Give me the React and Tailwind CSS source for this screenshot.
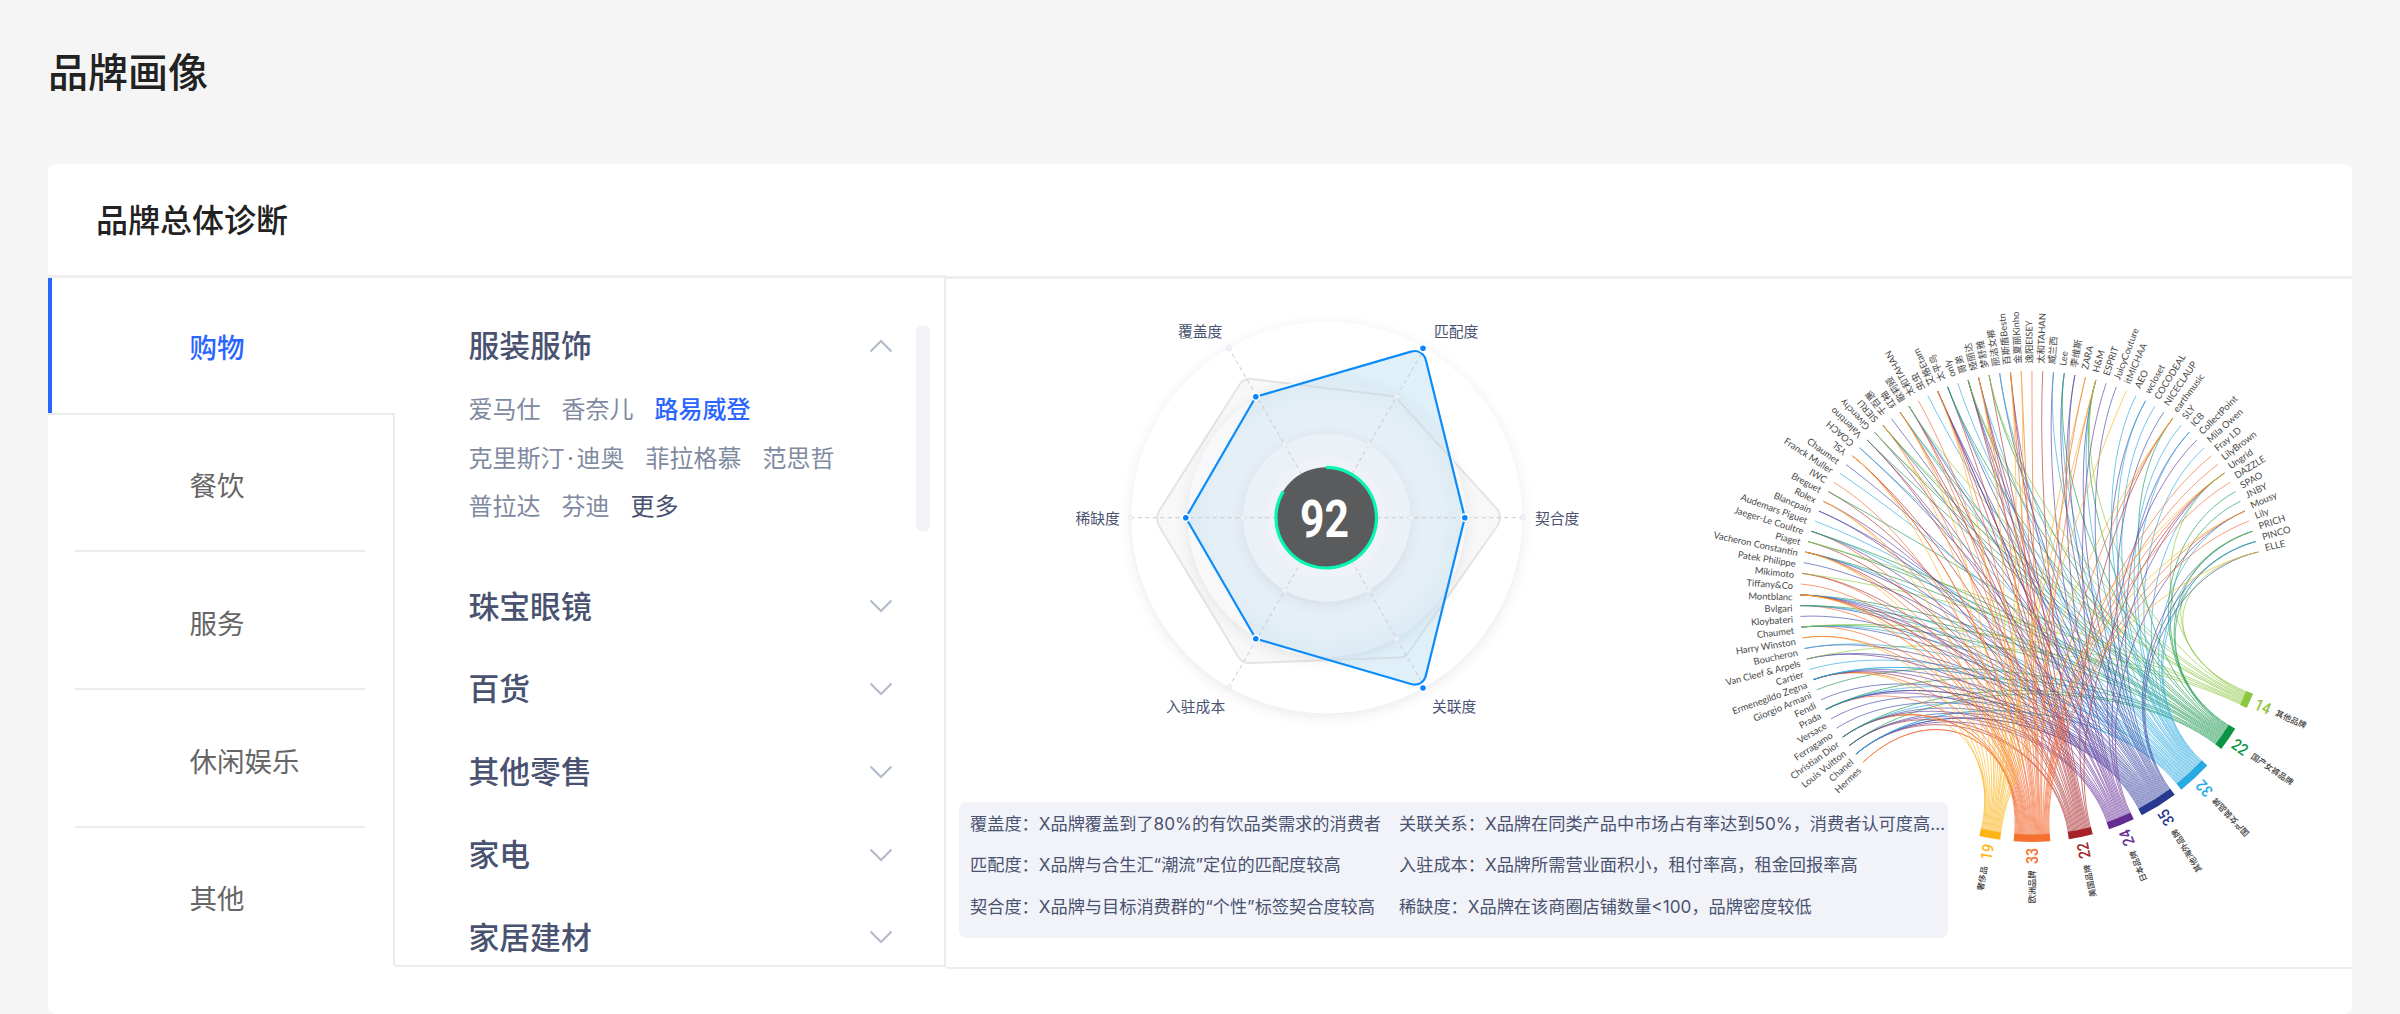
import React from "react";

const FONT = "font-['Noto_Sans_CJK_SC',sans-serif]";

const TABS = ["购物", "餐饮", "服务", "休闲娱乐", "其他"];

const BRAND_ROWS = [
  [{ t: "爱马仕" }, { t: "香奈儿" }, { t: "路易威登", k: "active" }],
  [{ t: "克里斯汀·迪奥" }, { t: "菲拉格慕" }, { t: "范思哲" }],
  [{ t: "普拉达" }, { t: "芬迪" }, { t: "更多", k: "more" }],
];

const CATEGORIES = ["珠宝眼镜", "百货", "其他零售", "家电", "家居建材"];

const NOTES = [
  ["覆盖度：X品牌覆盖到了80%的有饮品类需求的消费者", "关联关系：X品牌在同类产品中市场占有率达到50%，消费者认可度高…"],
  ["匹配度：X品牌与合生汇“潮流”定位的匹配度较高", "入驻成本：X品牌所需营业面积小，租付率高，租金回报率高"],
  ["契合度：X品牌与目标消费群的“个性”标签契合度较高", "稀缺度：X品牌在该商圈店铺数量<100，品牌密度较低"],
];

function Chevron({ up }) {
  return (
    <svg width="24" height="14" viewBox="0 0 24 14" fill="none" stroke="#b4bccb" strokeWidth="2.2">
      <path d={up ? "M1.5 12.5 12 2l10.5 10.5" : "M1.5 1.5 12 12 22.5 1.5"} />
    </svg>
  );
}

function Sidebar() {
  return (
    <nav className="w-[347px] shrink-0 text-[27.5px] text-[#666]">
      {TABS.map((t, i) =>
        i === 0 ? (
          <div key={t} className="flex h-[135px] items-center border-l-4 border-[#2b65ff] pt-[2px] pl-[137.5px] font-medium text-[#2b65ff]">
            {t}
          </div>
        ) : (
          <div
            key={t}
            className={
              i === 1
                ? "flex h-[139px] flex-col border-t-2 border-r-2 border-[#ececec]"
                : "flex h-[138px] flex-col border-r-2 border-[#ececec]"
            }
          >
            <div className={i === 4 ? "flex grow items-center pt-[2px] pl-[141.5px]" : "flex grow items-center pt-[5px] pl-[141.5px]"}>{t}</div>
            {i < 4 && <div className="mr-[28px] ml-[27px] h-[2px] shrink-0 bg-[#ededf0]" />}
          </div>
        )
      )}
    </nav>
  );
}

function BrandList() {
  return (
    <div className="flex w-[551px] shrink-0 justify-between border-r-2 border-b-2 border-[#ececec] pl-[73.5px]">
      <div className="w-[424px] pt-[47px] text-[#495270]">
        <div className="flex h-[42px] items-center justify-between text-[30.8px] font-medium">
          <span className="-mt-[3px]">服装服饰</span>
          <Chevron up />
        </div>
        <div className="mt-[19px] font-['Inter','Noto_Sans_CJK_SC',sans-serif] text-[24px] text-[#7f8aa0]">
          {BRAND_ROWS.map((row, i) => (
            <div key={i} className="flex h-[48.6px] items-center gap-[21px] whitespace-nowrap">
              {row.map((b) => (
                <span
                  key={b.t}
                  className={b.k === "active" ? "font-medium text-[#2b65ff]" : b.k === "more" ? "text-[#495270]" : ""}
                >
                  {b.t.includes("·") ? (
                    <>
                      {b.t.split("·")[0]}
                      <span className="mx-[2.5px]">·</span>
                      {b.t.split("·")[1]}
                    </>
                  ) : (
                    b.t
                  )}
                </span>
              ))}
            </div>
          ))}
        </div>
        <div className="mt-[33px] text-[30.8px] font-medium">
          {CATEGORIES.map((c) => (
            <div key={c} className="flex h-[82.8px] items-center justify-between">
              <span className="-mt-[3px]">{c}</span>
              <Chevron />
            </div>
          ))}
        </div>
      </div>
      <div className="mt-[47px] mr-[14px] h-[207px] w-[14px] rounded-full bg-[#f1f3f7]" />
    </div>
  );
}

const CX = 1326.8;
const CY = 517.7;
const HALF = Math.sqrt(3) / 2;
const DIRS = [
  [0.5, -HALF],
  [1, 0],
  [0.5, HALF],
  [-0.5, HALF],
  [-1, 0],
  [-0.5, -HALF],
];
const POINTS = [
  [1255.8, 396.7],
  [1423, 348.3],
  [1464.8, 517.7],
  [1423, 688],
  [1255.8, 638.7],
  [1185.8, 517.7],
];
const AXIS_LABELS = [
  ["覆盖度", 1178, 336.5],
  ["匹配度", 1434, 336.5],
  ["契合度", 1535, 523.5],
  ["关联度", 1432, 712],
  ["入驻成本", 1166, 712],
  ["稀缺度", 1075.5, 523.5],
];

function Radar() {
  const blue =
    "M1255.8 396.7 L1411 351.6 C1418 349.5 1424.5 353 1426.3 361.7 L1464.8 517.7 L1426.3 673.7 C1424.5 683 1418 686 1411 684 L1255.8 638.7 L1185.8 517.7Z";
  const gray =
    "M1252 379 L1392 396 Q1397 396.5 1399 401 L1498 510 Q1502 517.7 1498 525 L1408 653 Q1405 657.5 1400 657.6 L1248 663 Q1242 662.8 1239 658 L1159 526 Q1155.5 518 1159 511 L1240 384 Q1244 378 1252 379Z";
  return (
    <svg className="block" width="1004" height="523" viewBox="948 279 1004 523">
      <defs>
        <filter id="soft" x="-20%" y="-20%" width="140%" height="140%">
          <feDropShadow dx="0" dy="3" stdDeviation="6" floodColor="#4a5468" floodOpacity="0.13" />
        </filter>
        <radialGradient id="mid" cx="0.5" cy="0.5" r="0.5">
          <stop offset="0.55" stopColor="#e8eff6" />
          <stop offset="0.8" stopColor="#e5eff6" />
          <stop offset="1" stopColor="#dcebf4" />
        </radialGradient>
        <clipPath id="bluearea">
          <path d={blue} />
        </clipPath>
      </defs>
      <circle cx={CX} cy={CY} r="195.5" fill="#fff" filter="url(#soft)" />
      <path d={gray} fill="#f8f8f8" stroke="#e4e4e4" strokeWidth="2" />
      <circle cx={CX} cy={CY} r="139" fill="#f8f8fa" filter="url(#soft)" />
      <path d={blue} fill="#e0f0f9" />
      <g clipPath="url(#bluearea)">
        <circle cx={CX} cy={CY} r="139" fill="url(#mid)" filter="url(#soft)" />
        <path d={gray} fill="none" stroke="#d3dee4" strokeWidth="2" />
      </g>
      <circle cx={CX} cy={CY} r="83.7" fill="#ecf1f8" filter="url(#soft)" />
      <circle cx={CX} cy={CY} r="60" fill="#eff3f8" />
      {DIRS.map(([dx, dy], i) => (
        <g key={i}>
          <line
            x1={CX + dx * 50}
            y1={CY + dy * 50}
            x2={CX + dx * 196}
            y2={CY + dy * 196}
            stroke="#c5cad2"
            strokeWidth="1"
            strokeDasharray="4 3.5"
          />
          {[84, 140, 196].map((r) => (
            <circle key={r} cx={CX + dx * r} cy={CY + dy * r} r="2.5" fill="#f3f5f9" fillOpacity="0.8" stroke="#e6e9ef" strokeWidth="1" />
          ))}
        </g>
      ))}
      <path d={blue} fill="none" stroke="#0b8cf8" strokeWidth="2.2" strokeLinejoin="round" />
      {POINTS.map(([x, y]) => (
        <circle key={x + "-" + y} cx={x} cy={y} r="3.6" fill="#0a84ff" stroke="#fff" strokeWidth="1.6" />
      ))}
      <circle cx={CX - 0.6} cy={CY} r="50.5" fill="#5a5b5d" />
      <path d="M1326.2 467.4 A50.3 50.3 0 1 1 1283.4 491.3" fill="none" stroke="#08f5b4" strokeWidth="3.2" />
      <text
        x="1324.5"
        y="536.5"
        textAnchor="middle"
        textLength="49"
        lengthAdjust="spacingAndGlyphs"
        fill="#fff"
        className="font-['Roboto',sans-serif] text-[51px] font-bold"
      >
        92
      </text>
      <g fill="#495270" className="text-[14.8px]">
        {AXIS_LABELS.map(([t, x, y]) => (
          <text key={t} x={x} y={y}>
            {t}
          </text>
        ))}
      </g>
    </svg>
  );
}

/* Each brand is paired with the indexes of the groups it links to. */
const BRANDS = [
  ["Hermes", "11"], ["Chanel", "234455"], ["Louis Vuitton", "2346"], ["Christian Dior", "0113456"],
  ["Ferragamo", "4"], ["Versace", "4"], ["Prada", "134456"], ["Fendi", "4"], ["Giorgio Armani", "6"],
  ["Ermenegildo Zegna", "0123455"], ["Cartier", "5"], ["Van Cleef & Arpels", "347"], ["Boucheron", "45"],
  ["Harry Winston", "01"], ["Chaumet", "14567"], ["Kloybateri", "4"], ["Bvlgari", "1456"],
  ["Montblanc", "65432110"], ["Tiffany&Co", "1"], ["Mikimoto", "127"], ["Patek Philippe", "4"],
  ["Vacheron Constantin", "654210"], ["Piaget", "267"], ["Jaeger-Le Coultre", "1356"], ["Audemars Piguet", "5"],
  ["Blancpain", "34"], ["Rolex", "310"], ["Breguet", "26"], ["IWC", "1"], ["Franck Muller", "5"],
  ["Chaumet", "4"], ["YSL", "2110"], ["COACH", "45"], ["Valentino", "236"], ["Givenchy", "367"],
  ["SIERLI", "76410"], ["千百惠", "4"], ["红袖", "65210"], ["歌莉娅", "12457"], ["太和TAHAN", "1"],
  ["虫虫", "5"], ["艾格Etam", "432310"], ["太平鸟", "2456"], ["only", "5"], ["哥弟", "23467"],
  ["娅丽达", "53210"], ["梦舒雅", "267"], ["丽洁女裤", "45"], ["百斯盾Bestn", "3210"], ["金夏丽Kinho", "10"],
  ["逸阳EISEY", "1"], ["太和TAHAN", "2"], ["威兰西", "35"], ["Lee", "456"], ["李维斯", "34"], ["ZARA", "01"],
  ["H&M", "654107"], ["ESPRIT", "3"], ["JuicyCouture", "4"], ["itMICHAA", "0"], ["AEO", "5"], ["wcloset", "45"],
  ["COCODEAL", "5"], ["NICECLAUP", "4"], ["earthmusic", "6210"], ["SLY", "5"], ["ICB", "45"], ["CollectPoint", "3"],
  ["Mila Owen", "5"], ["Fray I.D", "1"], ["LilyBrown", "1"], ["Ungrid", "532107"], ["DAZZLE", "1"], ["SPAO", "6"],
  ["JNBY", "6"], ["Mousy", "5310"], ["Lily", "1"], ["PRICH", "4567"], ["PINCO", "465"], ["ELLE", "740"],
];

const GROUPS = [
  { n: 19, name: "奢侈品", a: 100.2, c: "#fdb515", flip: true },
  { n: 33, name: "欧洲品牌", a: 90, c: "#f47130", flip: true },
  { n: 22, name: "美国品牌", a: 78.2, c: "#a52228", flip: true },
  { n: 24, name: "日本品牌", a: 68, c: "#652d90", flip: true },
  { n: 35, name: "其他海外品牌", a: 58, c: "#28388f", flip: true },
  { n: 32, name: "国产女装品牌", a: 47.1, c: "#27a9e1", flip: true },
  { n: 22, name: "国产女裤品牌", a: 34.7, c: "#0b9444", flip: false },
  { n: 14, name: "其他品牌", a: 24.2, c: "#8cc63f", flip: false },
];
const LINE_COLORS = ["#fbb829", "#f3703a", "#b23a3c", "#7440a0", "#4a53a8", "#35aee2", "#2a9f5a", "#93ca4c"];

const OX = 2032;
const OY = 603;
const R = 232;
const polar = (deg, r) => {
  const t = (deg * Math.PI) / 180;
  return [OX + r * Math.cos(t), OY + r * Math.sin(t)];
};
const brandAngle = (i) => 136.7 + i * 2.6658;
const PER = 0.267;

function buildLinks() {
  const totals = GROUPS.map((_, g) => BRANDS.reduce((s, b) => s + b[1].split(String(g)).length - 1, 0));
  const used = GROUPS.map(() => 0);
  const links = [];
  BRANDS.forEach(([, gs], i) => {
    for (const ch of gs) {
      const g = Number(ch);
      const span = GROUPS[g].n * PER;
      const aTo = GROUPS[g].a + span / 2 - ((used[g] + 0.5) / totals[g]) * span;
      used[g] += 1;
      const aFrom = brandAngle(i);
      let diff = Math.abs(aFrom - aTo) % 360;
      if (diff > 180) diff = 360 - diff;
      const k = 0.42 + 0.16 * Math.max(0, (diff - 60) / 120);
      const [x0, y0] = polar(aFrom, R);
      const [x1, y1] = polar(aFrom, R * (1 - k));
      const [x2, y2] = polar(aTo, R * (1 - k));
      const [x3, y3] = polar(aTo, R);
      links.push({ g, d: `M${x0} ${y0}C${x1} ${y1} ${x2} ${y2} ${x3} ${y3}` });
    }
  });
  return links;
}
const LINKS = buildLinks();

function sector(a, span, r0, r1) {
  const [ax, ay] = polar(a - span / 2, r0);
  const [bx, by] = polar(a + span / 2, r0);
  const [cx, cy] = polar(a + span / 2, r1);
  const [dx, dy] = polar(a - span / 2, r1);
  return `M${ax} ${ay}A${r0} ${r0} 0 0 1 ${bx} ${by}L${cx} ${cy}A${r1} ${r1} 0 0 0 ${dx} ${dy}Z`;
}

function RadialText({ a, r, flip, anchor, children, ...rest }) {
  const [x, y] = polar(a, r);
  const side = anchor || (flip ? "end" : "start");
  return (
    <text transform={`translate(${x} ${y}) rotate(${flip ? a + 180 : a})`} textAnchor={side} dy="0.35em" {...rest}>
      {children}
    </text>
  );
}

function Chord() {
  return (
    <svg className="-ml-[252px] block shrink-0" width="652" height="689" viewBox="1700 279 652 689">
      <g fill="none" strokeWidth="0.95" strokeOpacity="0.72">
        {LINKS.map((l, i) => (
          <path key={i} d={l.d} stroke={LINE_COLORS[l.g]} />
        ))}
      </g>
      {GROUPS.map((g) => (
        <g key={g.name}>
          <path d={sector(g.a, g.n * PER, 231.5, 239)} fill={g.c} />
          <RadialText
            a={g.a}
            r={253}
            flip={g.flip}
            anchor="middle"
            fill={g.c}
            textLength="16"
            lengthAdjust="spacingAndGlyphs"
            className="font-['Roboto',sans-serif] text-[16px] font-medium"
          >
            {g.n}
          </RadialText>
          <RadialText a={g.a} r={267.5} flip={g.flip} fill="#3c3c3c" className="text-[8.2px] font-medium">
            {g.name}
          </RadialText>
        </g>
      ))}
      <g fill="#484848" className="font-['Lato','Noto_Sans_CJK_SC',sans-serif] text-[9.4px]">
        {BRANDS.map(([name], i) => (
          <RadialText key={i} a={brandAngle(i) - 0.6} r={239.5} flip={i < 31}>
            {name}
          </RadialText>
        ))}
      </g>
    </svg>
  );
}

function Notes() {
  return (
    <div className="ml-[11px] h-[136px] w-[989px] rounded-lg bg-[#f2f3f8] pt-[1px] pl-[11px] font-['Inter','Noto_Sans_CJK_SC',sans-serif] text-[17.2px] text-[#495270]">
      {NOTES.map(([l, r]) => (
        <div key={l} className="flex h-[41.5px] items-center whitespace-nowrap">
          <div className="w-[429px] shrink-0">{l}</div>
          <div>{r}</div>
        </div>
      ))}
    </div>
  );
}

export default function App() {
  return (
    <div className={`h-[1014px] w-[2400px] overflow-hidden bg-[#f5f5f5] px-12 ${FONT}`}>
      <h1 className="flex h-[164px] items-center pb-[25px] text-[40px] leading-none font-medium text-[#222]">品牌画像</h1>
      <main className="h-[850px] rounded-lg bg-white">
        <h2 className="flex h-[111px] items-center pb-[3px] pl-12 text-[32px] leading-none font-medium text-[#222]">品牌总体诊断</h2>
        <div className="flex">
          <div className="flex h-[692px] w-[898px] shrink-0 border-t-[3px] border-[#eeeeef]">
            <Sidebar />
            <BrandList />
          </div>
          <section className="mt-px flex h-[693px] w-[1406px] border-t-[3px] border-b-2 border-[#eeeeef]">
            <div className="w-[1006px] shrink-0 pl-[2px]">
              <Radar />
              <Notes />
            </div>
            <Chord />
          </section>
        </div>
      </main>
    </div>
  );
}
